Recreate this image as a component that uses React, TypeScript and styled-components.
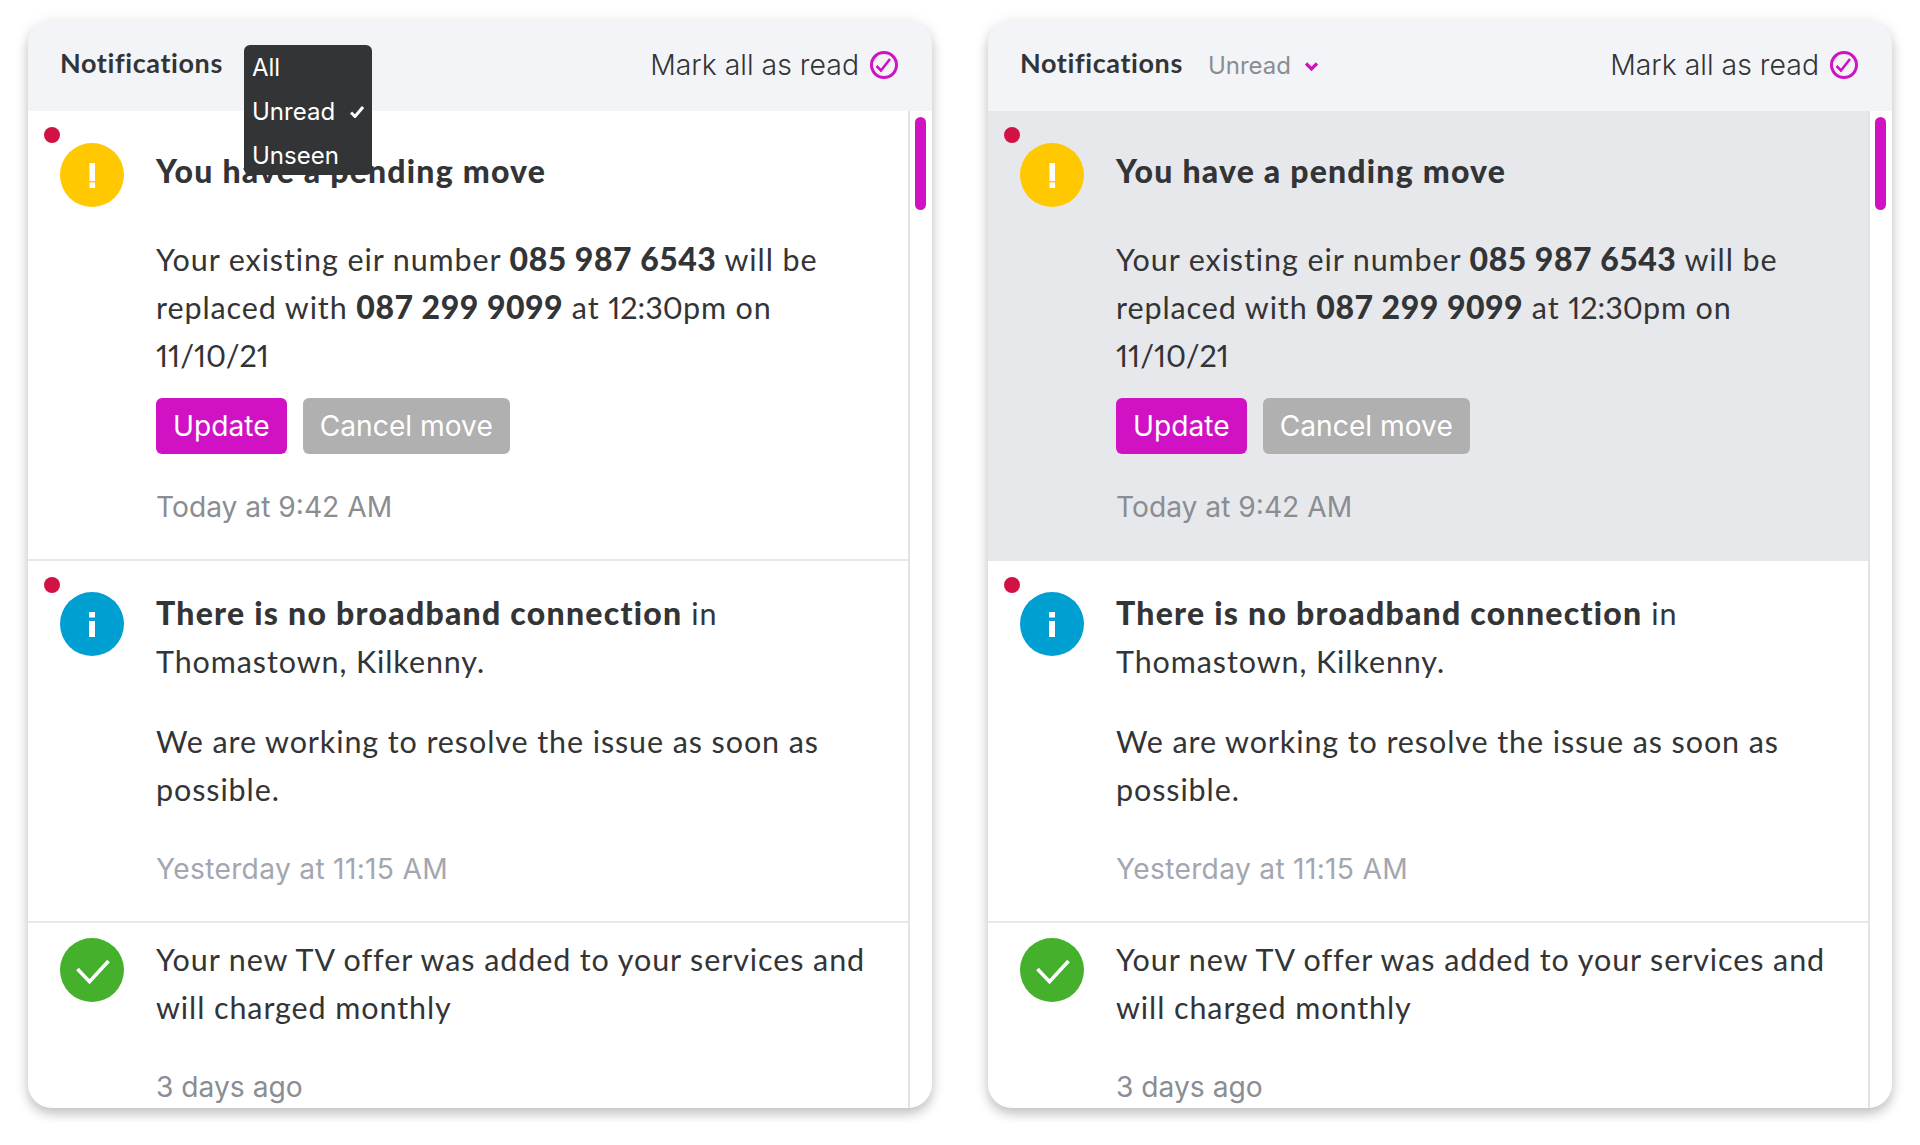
import React from 'react';
import styled, { createGlobalStyle } from 'styled-components';

const GlobalStyle = createGlobalStyle`
  html, body {
    margin: 0;
    padding: 0;
    background: #ffffff;
  }
`;

const Page = styled.div`
  display: flex;
  gap: 56px;
  padding: 21px 28px 0;
  height: 1145px;
  box-sizing: border-box;
  overflow: hidden;
`;

const Card = styled.section`
  position: relative;
  width: 904px;
  height: 1087px;
  border-radius: 24px;
  background: #ffffff;
  box-shadow: 0 6px 12px rgba(0, 0, 0, 0.22), 0 0 18px rgba(0, 0, 0, 0.06);
  overflow: hidden;
  display: flex;
  flex-direction: column;
`;

const Header = styled.header`
  position: relative;
  height: 90px;
  flex: none;
  display: flex;
  align-items: center;
  padding: 0 34px 0 32px;
  background: #f3f4f8;
`;

const HeaderTitle = styled.h2`
  margin: -6px 0 0;
  font: 700 27px/36px 'Lato', sans-serif;
  letter-spacing: 0.6px;
  color: #333436;
`;

const Filter = styled.div`
  display: flex;
  align-items: center;
  gap: 14px;
  margin-left: 25px;
  font: 400 24px/32px 'Inter', sans-serif;
  color: #8a8d91;
`;

const MarkRead = styled.div`
  display: flex;
  align-items: center;
  gap: 11px;
  margin-left: auto;
  margin-top: -3px;
  font: 300 28.4px/36px 'Inter', sans-serif;
  color: #333436;
`;

const Menu = styled.ul`
  position: absolute;
  top: 24px;
  left: 216px;
  z-index: 2;
  width: 128px;
  height: 130px;
  margin: 0;
  padding: 1px 0 0;
  box-sizing: border-box;
  list-style: none;
  border-radius: 6px;
  background: #333436;
`;

const MenuItem = styled.li`
  display: flex;
  align-items: center;
  justify-content: space-between;
  height: 44px;
  padding: 0 8px;
  font: 400 24px/44px 'Inter', sans-serif;
  color: #ffffff;
`;

const Content = styled.div`
  flex: 1;
  display: flex;
  min-height: 0;
`;

const List = styled.div`
  width: 882px;
  flex: none;
  border-right: 2px solid #e2e3e6;
  box-sizing: border-box;
`;

const ScrollTrack = styled.div`
  flex: 1;
  padding: 6px 6px 0 5px;
`;

const ScrollThumb = styled.div`
  width: 11px;
  height: 93px;
  border-radius: 6px;
  background: #d012c4;
`;

const Row = styled.article<{ $selected?: boolean; $height: number }>`
  position: relative;
  display: flex;
  gap: 32px;
  height: ${(p) => p.$height}px;
  padding: 0 32px;
  box-sizing: border-box;
  background: ${(p) => (p.$selected ? '#e7e8ec' : 'transparent')};
  border-bottom: 2px solid ${(p) => (p.$selected ? '#e7e8ec' : '#e6eaf0')};

  &:last-child {
    border-bottom: 0;
  }
`;

const UnreadDot = styled.span`
  position: absolute;
  left: 16px;
  top: 16px;
  width: 16px;
  height: 16px;
  border-radius: 50%;
  background: #d21245;
`;

const StatusIcon = styled.div<{ $color: string; $top: number }>`
  flex: none;
  width: 64px;
  height: 64px;
  margin-top: ${(p) => p.$top}px;
  border-radius: 50%;
  background: ${(p) => p.$color};
`;

const Body = styled.div<{ $top: number }>`
  flex: 1;
  padding-top: ${(p) => p.$top}px;
  font: 400 30.5px/48px 'Lato', sans-serif;
  letter-spacing: 0.9px;
  color: #333436;
  white-space: nowrap;
`;

const Title = styled.h3`
  margin: 0 0 40px;
  font: 900 32px/48px 'Lato', sans-serif;
  letter-spacing: 1.2px;
  color: #333436;
`;

const Paragraph = styled.p<{ $gap?: number }>`
  margin: 0 0 ${(p) => p.$gap ?? 0}px;
`;

const Strong = styled.strong<{ $figures?: boolean }>`
  font-size: 32px;
  font-weight: 900;
  letter-spacing: ${(p) => (p.$figures ? '0.5px' : '1.25px')};
`;

const Figures = styled.span`
  font-variant-numeric: proportional-nums;
  font-feature-settings: 'pnum';
  letter-spacing: 0;
`;

const Actions = styled.div`
  display: flex;
  gap: 16px;
  margin-top: 19px;
`;

const Button = styled.button<{ $variant: 'primary' | 'muted' }>`
  height: 56px;
  padding: 0 17px;
  border: 0;
  border-radius: 6px;
  font: 400 28.2px/56px 'Inter', sans-serif;
  color: #ffffff;
  background: ${(p) => (p.$variant === 'primary' ? '#d012c4' : '#afb0af')};
`;

const Time = styled.div<{ $gap: number; $light?: boolean }>`
  margin-top: ${(p) => p.$gap}px;
  font: 400 28.2px/32px 'Inter', sans-serif;
  letter-spacing: ${(p) => (p.$light ? '0.3px' : '0')};
  color: ${(p) => (p.$light ? '#a3a6b1' : '#8a8d91')};
`;

const Glyph = styled.svg`
  display: block;
`;

const CircleCheck = () => (
  <Glyph width="28" height="28" viewBox="0 0 28 28" fill="none" stroke="#d012c4">
    <circle cx="14" cy="14" r="12.5" strokeWidth="3" />
    <path d="M6.5 15l4.5 4.5L20 8" strokeWidth="2.6" />
  </Glyph>
);

const WarnGlyph = () => (
  <Glyph width="64" height="64" viewBox="0 0 64 64" fill="#fff">
    <rect x="29.5" y="20" width="5.5" height="18" />
    <rect x="29.5" y="39.5" width="5.5" height="5.5" />
  </Glyph>
);

const InfoGlyph = () => (
  <Glyph width="64" height="64" viewBox="0 0 64 64" fill="#fff">
    <rect x="29" y="20" width="6" height="5.5" />
    <rect x="29" y="29" width="6" height="16" />
  </Glyph>
);

const SuccessGlyph = () => (
  <Glyph width="64" height="64" viewBox="0 0 64 64" fill="none" stroke="#fff" strokeWidth="3.6">
    <path d="M17.5 31l12 12.7L48.5 23" />
  </Glyph>
);

const Panel = ({ open }: { open: boolean }) => (
  <Card>
    <Header>
      <HeaderTitle>Notifications</HeaderTitle>
      {open ? (
        <Menu>
          <MenuItem>All</MenuItem>
          <MenuItem>
            Unread
            <svg width="14" height="12" viewBox="0 0 14 12" fill="none" stroke="#fff" strokeWidth="3">
              <path d="M1 6.5l4 4L13 1" />
            </svg>
          </MenuItem>
          <MenuItem>Unseen</MenuItem>
        </Menu>
      ) : (
        <Filter>
          Unread
          <svg width="13" height="9" viewBox="0 0 13 9" fill="none" stroke="#d012c4" strokeWidth="3.2">
            <path d="M1 1.5l5.5 5.5L12 1.5" />
          </svg>
        </Filter>
      )}
      <MarkRead>
        Mark all as read
        <CircleCheck />
      </MarkRead>
    </Header>
    <Content>
      <List>
        <Row $selected={!open} $height={450}>
          <UnreadDot />
          <StatusIcon $color="#ffc800" $top={32}>
            <WarnGlyph />
          </StatusIcon>
          <Body $top={36}>
            <Title>You have a pending move</Title>
            <Paragraph>
              Your existing eir number <Strong $figures>085 987 6543</Strong> will be
              <br />
              replaced with <Strong $figures>087 299 9099</Strong> at <Figures>12:30</Figures>pm on
              <br />
              <Figures>11/10/21</Figures>
            </Paragraph>
            <Actions>
              <Button $variant="primary">Update</Button>
              <Button $variant="muted">Cancel move</Button>
            </Actions>
            <Time $gap={37}>Today at 9:42 AM</Time>
          </Body>
        </Row>
        <Row $height={362}>
          <UnreadDot />
          <StatusIcon $color="#009fd1" $top={31}>
            <InfoGlyph />
          </StatusIcon>
          <Body $top={28}>
            <Paragraph $gap={32}>
              <Strong>There is no broadband connection</Strong> in
              <br />
              Thomastown, Kilkenny.
            </Paragraph>
            <Paragraph>
              We are working to resolve the issue as soon as
              <br />
              possible.
            </Paragraph>
            <Time $gap={40} $light>
              Yesterday at 11:15 AM
            </Time>
          </Body>
        </Row>
        <Row $height={185}>
          <StatusIcon $color="#44b02c" $top={15}>
            <SuccessGlyph />
          </StatusIcon>
          <Body $top={12}>
            <Paragraph>
              Your new TV offer was added to your services and
              <br />
              will charged monthly
            </Paragraph>
            <Time $gap={40}>3 days ago</Time>
          </Body>
        </Row>
      </List>
      <ScrollTrack>
        <ScrollThumb />
      </ScrollTrack>
    </Content>
  </Card>
);

const App = () => (
  <>
    <GlobalStyle />
    <Page>
      <Panel open />
      <Panel open={false} />
    </Page>
  </>
);

export default App;
